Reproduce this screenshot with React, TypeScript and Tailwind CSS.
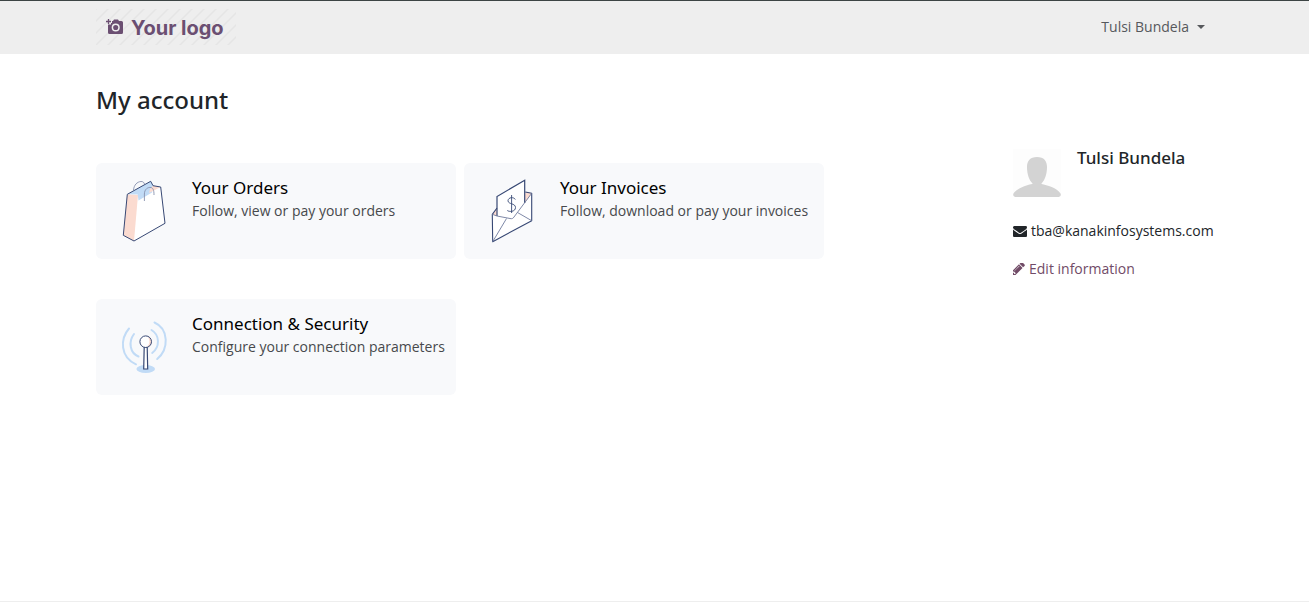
import type { ReactNode } from "react";

const BagIcon = () => (
  <svg viewBox="0 0 64 64" className="size-16 shrink-0" fill="none" aria-hidden="true">
    <path d="M15.3 15.3 38.7 2.3 41 6.7 48.7 8 53 44.3 22 62 11.3 56.3Z" fill="#fff" />
    <path d="M15.3 15.3 26 16 22 62 11.3 56.3Z" fill="#fbdbd0" />
    <path d="M15.3 15.3 38.7 2.3 41 7 40 13.5 26.5 21.5 25.7 15.5Z" fill="#c1dbf6" />
    <path d="M38 10 41 6.7 48.7 8 37 14Z" fill="#fbdbd0" />
    <path
      d="M15.3 15.3 38.7 2.3 41 6.7 48.7 8 53 44.3 22 62 11.3 56.3Z"
      stroke="#374874"
      strokeWidth="1"
      strokeLinejoin="round"
    />
    <path
      d="M21.5 11C22 6 25 2.8 29 2.5 31 2.4 32 3.5 32.5 5M32.4 22V15C32.5 10 36 8 39 8.5 41 9 42 11 42 16"
      stroke="#8791ae"
      strokeWidth="0.9"
    />
  </svg>
);

const InvoiceIcon = () => (
  <svg viewBox="0 0 64 64" className="size-16 shrink-0" fill="none" aria-hidden="true">
    <path d="M12.3 35.3 17 27 45.3 13 51.7 14.3V41.7L12.7 62.7Z" fill="#fff" />
    <path d="M12.3 35.3 17 29V37ZM45.3 13 51.7 14.3 44 25Z" fill="#fbdbd0" />
    <path d="M17 17.5 44.7 1.2V25L33 40 17 37Z" fill="#fff" />
    <path d="M17 37V17.5L44.7 1.2V24" stroke="#374874" strokeWidth="1.2" />
    <path
      d="M17 29 12.3 35.3 12.7 62.7 51.7 41.7V14.3L45.3 13"
      stroke="#374874"
      strokeWidth="1.1"
      strokeLinejoin="round"
    />
    <path
      d="M12.3 35.3 17 37 30 39.5C32 40 33 39.5 34 38L51.7 14.3M26.5 39.5 12.7 62.7M37.5 33.5 51.7 41.7"
      stroke="#6f7b9d"
      strokeWidth="0.9"
    />
    <path
      d="M35.3 20.5C34 17.8 28.3 18 28 21.7 28 25.5 35.5 24 35.5 28.5 35.5 33 29 33 27.3 31.5M31.6 16V34"
      stroke="#374874"
      strokeWidth="0.9"
    />
  </svg>
);

const ConnectionIcon = () => (
  <svg viewBox="0 0 64 64" className="size-16 shrink-0" fill="none" aria-hidden="true">
    <g stroke="#c1dbf6" strokeWidth="2" strokeLinecap="round">
      <path d="M17 13.5C8 24 8 42 24 49.3" />
      <path d="M22 19C16 27 18 38 26.5 41.5" />
      <path d="M39.5 15C48 20 48 32 40.2 38" />
      <path d="M42.5 7.5C57 14 57 34 45.2 44" />
    </g>
    <ellipse cx="33.7" cy="54" rx="9.3" ry="4" fill="#c1dbf6" />
    <path d="M32.2 32H35.2L35.7 54H31.7Z" fill="#fff" stroke="#374874" strokeWidth="1.2" />
    <circle cx="33.7" cy="26.7" r="5.8" fill="#fff" />
    <path d="M36 22C38 25 38 29 35 31.5 41 31 41 23 36 22Z" fill="#fbdbd0" />
    <circle cx="33.7" cy="26.7" r="5.8" stroke="#374874" strokeWidth="1" />
  </svg>
);

const Logo = () => (
  <a href="#" className="relative flex h-9 w-[140px] items-center gap-2 pl-2.5 text-[#6b4f72]">
    <svg className="absolute inset-0 size-full" aria-hidden="true">
      <defs>
        <pattern id="hatch" width="12" height="12" patternUnits="userSpaceOnUse">
          <path d="M-2 14 14 -2M-2 2 2 -2M10 14 14 10" stroke="#e5e5e5" strokeWidth="1.5" />
        </pattern>
      </defs>
      <rect width="100%" height="100%" fill="url(#hatch)" />
    </svg>
    <svg viewBox="0 0 17 17" className="relative size-[17px] shrink-0" fill="none" aria-hidden="true">
      <path
        d="M6 3H7L8 1.5H12L13 3H15.5Q17 3 17 4.5V14.5Q17 16 15.5 16H3.5Q2 16 2 14.5V6.5H5V5H6Z"
        fill="currentColor"
      />
      <path d="M0 3.5H5M2.5 1V6" stroke="currentColor" strokeWidth="1.3" />
      <circle cx="9.7" cy="9.5" r="3.3" fill="#6b4f72" stroke="#eee" strokeWidth="1.5" />
    </svg>
    <span className="relative pt-0.5 font-[Inter,sans-serif] text-xl font-bold whitespace-nowrap">
      Your logo
    </span>
  </a>
);

type CardProps = {
  icon: ReactNode;
  title: string;
  text: string;
};

const PortalCard = ({ icon, title, text }: CardProps) => (
  <a href="#" className="flex w-[360px] gap-4 rounded-md bg-[#f8f9fb] p-4">
    {icon}
    <div className="whitespace-nowrap">
      <h2 className="font-['Noto_Sans',sans-serif] text-[17px] leading-[18px] text-black">{title}</h2>
      <p className="text-sm leading-7 text-[#47494c]">{text}</p>
    </div>
  </a>
);

const App = () => {
  return (
    <div className="flex min-h-screen flex-col border-b border-[#eeeeee] bg-white font-['Open_Sans',sans-serif] text-sm text-[#212529]">
      <header className="border-t border-[#3c4444] bg-[#eeeeee]">
        <nav className="mx-auto flex h-[53px] max-w-[1141px] items-center justify-between px-3 pb-0.5">
          <Logo />
          <button type="button" className="flex items-center gap-2 pr-2 text-[#56585c]">
            Tulsi Bundela
            <svg viewBox="0 0 8 4" className="h-1 w-2" fill="currentColor" aria-hidden="true">
              <path d="M0 0H8L4 4Z" />
            </svg>
          </button>
        </nav>
      </header>

      <main className="mx-auto w-full max-w-[1141px] grow px-3 pt-8">
        <h1 className="font-['Noto_Sans',sans-serif] text-2xl leading-7 font-medium">My account</h1>
        <div className="flex justify-between pt-8">
          <div className="flex flex-col gap-10 pt-[17px]">
            <div className="flex gap-2">
              <PortalCard icon={<BagIcon />} title="Your Orders" text="Follow, view or pay your orders" />
              <PortalCard icon={<InvoiceIcon />} title="Your Invoices" text="Follow, download or pay your invoices" />
            </div>
            <PortalCard
              icon={<ConnectionIcon />}
              title="Connection & Security"
              text="Configure your connection parameters"
            />
          </div>

          <aside className="w-[200px] shrink-0 pt-[3px] whitespace-nowrap">
            <div className="flex gap-4">
              <svg viewBox="0 0 48 48" className="size-12 shrink-0" fill="#d3d3d3" aria-hidden="true">
                <rect width="48" height="48" fill="#fdfdfd" />
                <path d="M24 8C31 8 34 12 34 18 34 25 32 31 28.5 34.5V35C34 36 44 39 47.5 44.5 48.5 46.5 47 48 44 48H4C1 48-.5 46.5.5 44.5 4 39 14 36 19.5 35V34.5C16 31 14 25 14 18 14 12 17 8 24 8Z" />
              </svg>
              <h2 className="font-['Noto_Sans',sans-serif] text-[17px] leading-[18px] font-medium">
                Tulsi Bundela
              </h2>
            </div>
            <div className="flex items-center gap-1 pt-6 leading-5">
              <svg viewBox="0 0 1792 1792" className="size-3.5 shrink-0" fill="currentColor" aria-hidden="true">
                <path d="M1792 710v794q0 66-47 113t-113 47h-1472q-66 0-113-47t-47-113v-794q44 49 101 87 362 246 497 345 57 42 92.5 65.5t94.5 48 110 24.5h2q51 0 110-24.5t94.5-48 92.5-65.5q170-123 498-345 57-39 100-87zm0-294q0 79-49 151t-122 123q-376 261-468 325-10 7-42.5 31t-54 38.5-52 32.5-57.5 27-50 9h-2q-23 0-50-9t-57.5-27-52-32.5-54-38.5-42.5-31q-91-64-262-182.5t-205-142.5q-62-42-117-115.5t-55-136.5q0-78 41.5-130t118.5-52h1472q65 0 112.5 47t47.5 113z" />
              </svg>
              <span>tba@kanakinfosystems.com</span>
            </div>
            <a href="#" className="flex items-center gap-1 pt-[18px] leading-5 text-[#714b67]">
              <svg viewBox="256 256 1408 1408" className="size-3 shrink-0" fill="currentColor" aria-hidden="true">
                <path d="M491 1536l91-91-235-235-91 91v107h128v128h107zm523-928q0-22-22-22-10 0-17 7l-542 542q-7 7-7 17 0 22 22 22 10 0 17-7l542-542q7-7 7-17zm-54-192l416 416-832 832h-416v-416zm683 96q0 53-37 90l-166 166-416-416 166-165q36-38 90-38 53 0 91 38l235 234q37 39 37 91z" />
              </svg>
              Edit information
            </a>
          </aside>
        </div>
      </main>
    </div>
  );
};

export default App;
